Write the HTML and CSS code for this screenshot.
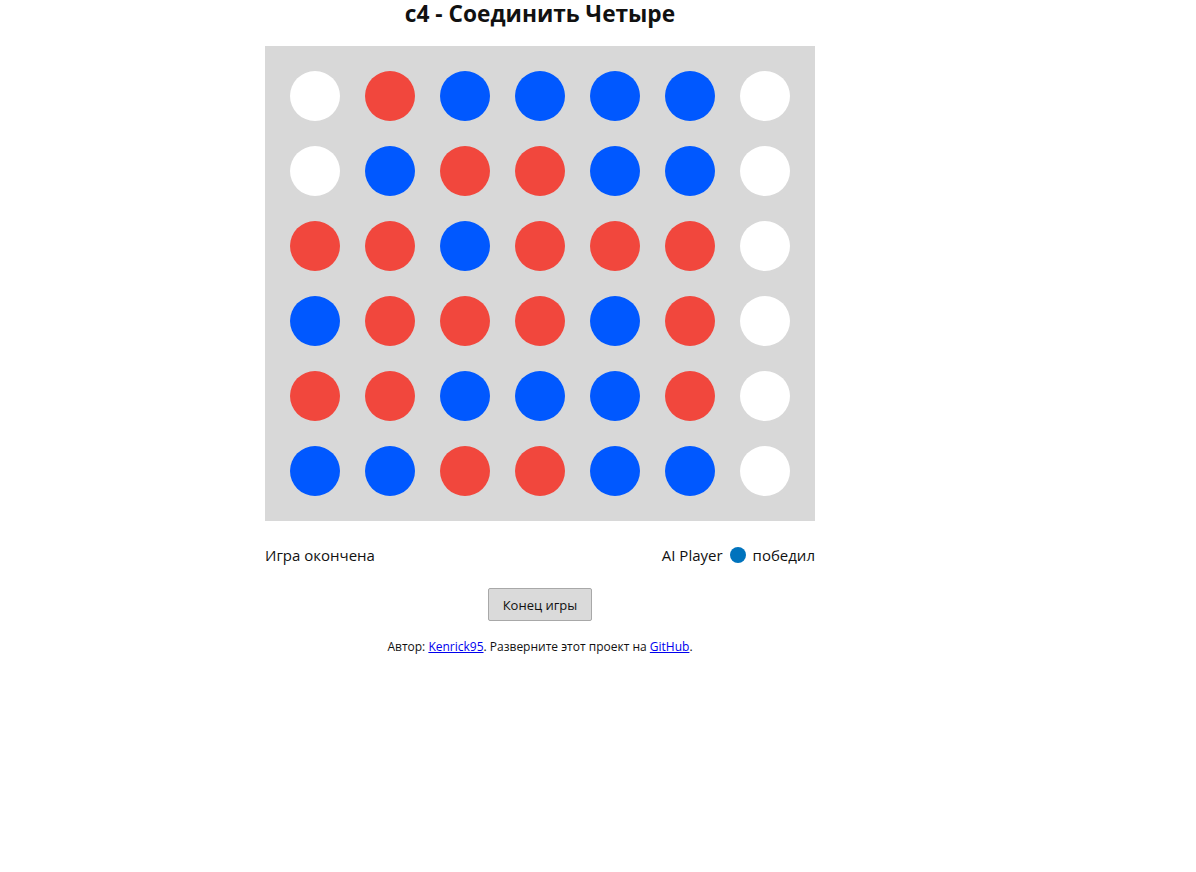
FILE: index.html
```html
<!DOCTYPE html>
<html lang="ru">
<head>
<meta charset="utf-8">
<title>c4 - Соединить Четыре</title>
<link rel="stylesheet" href="styles.css">
</head>
<body>
<div class="app">
  <h1 class="title">c4 - Соединить Четыре</h1>
  <div class="board">
    <span class="cell empty"></span><span class="cell red"></span><span class="cell blue"></span><span class="cell blue"></span><span class="cell blue"></span><span class="cell blue"></span><span class="cell empty"></span>
    <span class="cell empty"></span><span class="cell blue"></span><span class="cell red"></span><span class="cell red"></span><span class="cell blue"></span><span class="cell blue"></span><span class="cell empty"></span>
    <span class="cell red"></span><span class="cell red"></span><span class="cell blue"></span><span class="cell red"></span><span class="cell red"></span><span class="cell red"></span><span class="cell empty"></span>
    <span class="cell blue"></span><span class="cell red"></span><span class="cell red"></span><span class="cell red"></span><span class="cell blue"></span><span class="cell red"></span><span class="cell empty"></span>
    <span class="cell red"></span><span class="cell red"></span><span class="cell blue"></span><span class="cell blue"></span><span class="cell blue"></span><span class="cell red"></span><span class="cell empty"></span>
    <span class="cell blue"></span><span class="cell blue"></span><span class="cell red"></span><span class="cell red"></span><span class="cell blue"></span><span class="cell blue"></span><span class="cell empty"></span>
  </div>
  <div class="status">
    <span>Игра окончена</span>
    <span class="winner">AI Player <span class="dot"></span> победил</span>
  </div>
  <div class="actions">
    <button class="btn" type="button">Конец игры</button>
  </div>
  <p class="footer">Автор: <a href="#">Kenrick95</a>. Разверните этот проект на <a href="#">GitHub</a>.</p>
</div>
</body>
</html>
```
FILE: styles.css
```css
html, body {
  margin: 0;
  padding: 0;
  background: #fff;
}
body {
  font-family: "Open Sans", "Noto Sans", "Liberation Sans", sans-serif;
  color: #111;
}
.app {
  width: 550px;
  margin-left: 265px;
  display: flex;
  flex-direction: column;
}
.title {
  margin: 0;
  font-size: 22.7px;
  line-height: 27px;
  font-weight: 700;
  text-align: center;
  height: 46px;
}
.board {
  background: #d8d8d8;
  padding: 25px;
  display: grid;
  grid-template-columns: repeat(7, 50px);
  grid-auto-rows: 50px;
  gap: 25px;
}
.cell {
  display: block;
  width: 50px;
  height: 50px;
  border-radius: 50%;
}
.empty { background: #ffffff; }
.red { background: #f1473d; }
.blue { background: #0058ff; }
.status {
  display: flex;
  justify-content: space-between;
  align-items: center;
  margin-top: 24px;
  font-size: 15px;
  line-height: 20px;
}
.winner {
  display: flex;
  align-items: center;
  gap: 7px;
}
.dot {
  display: inline-block;
  width: 16px;
  height: 16px;
  border-radius: 50%;
  background: #0073bd;
}
.actions {
  display: flex;
  justify-content: center;
  margin-top: 23px;
}
.btn {
  font-family: inherit;
  font-size: 13px;
  color: #111;
  background: #dadada;
  border: 1px solid #a8a8a8;
  border-radius: 2px;
  width: 104px;
  height: 33px;
  padding: 0;
}
.footer {
  margin: 18px 0 0;
  text-align: center;
  font-size: 12px;
  line-height: 15px;
}
.footer a {
  color: #0000ee;
}
```
